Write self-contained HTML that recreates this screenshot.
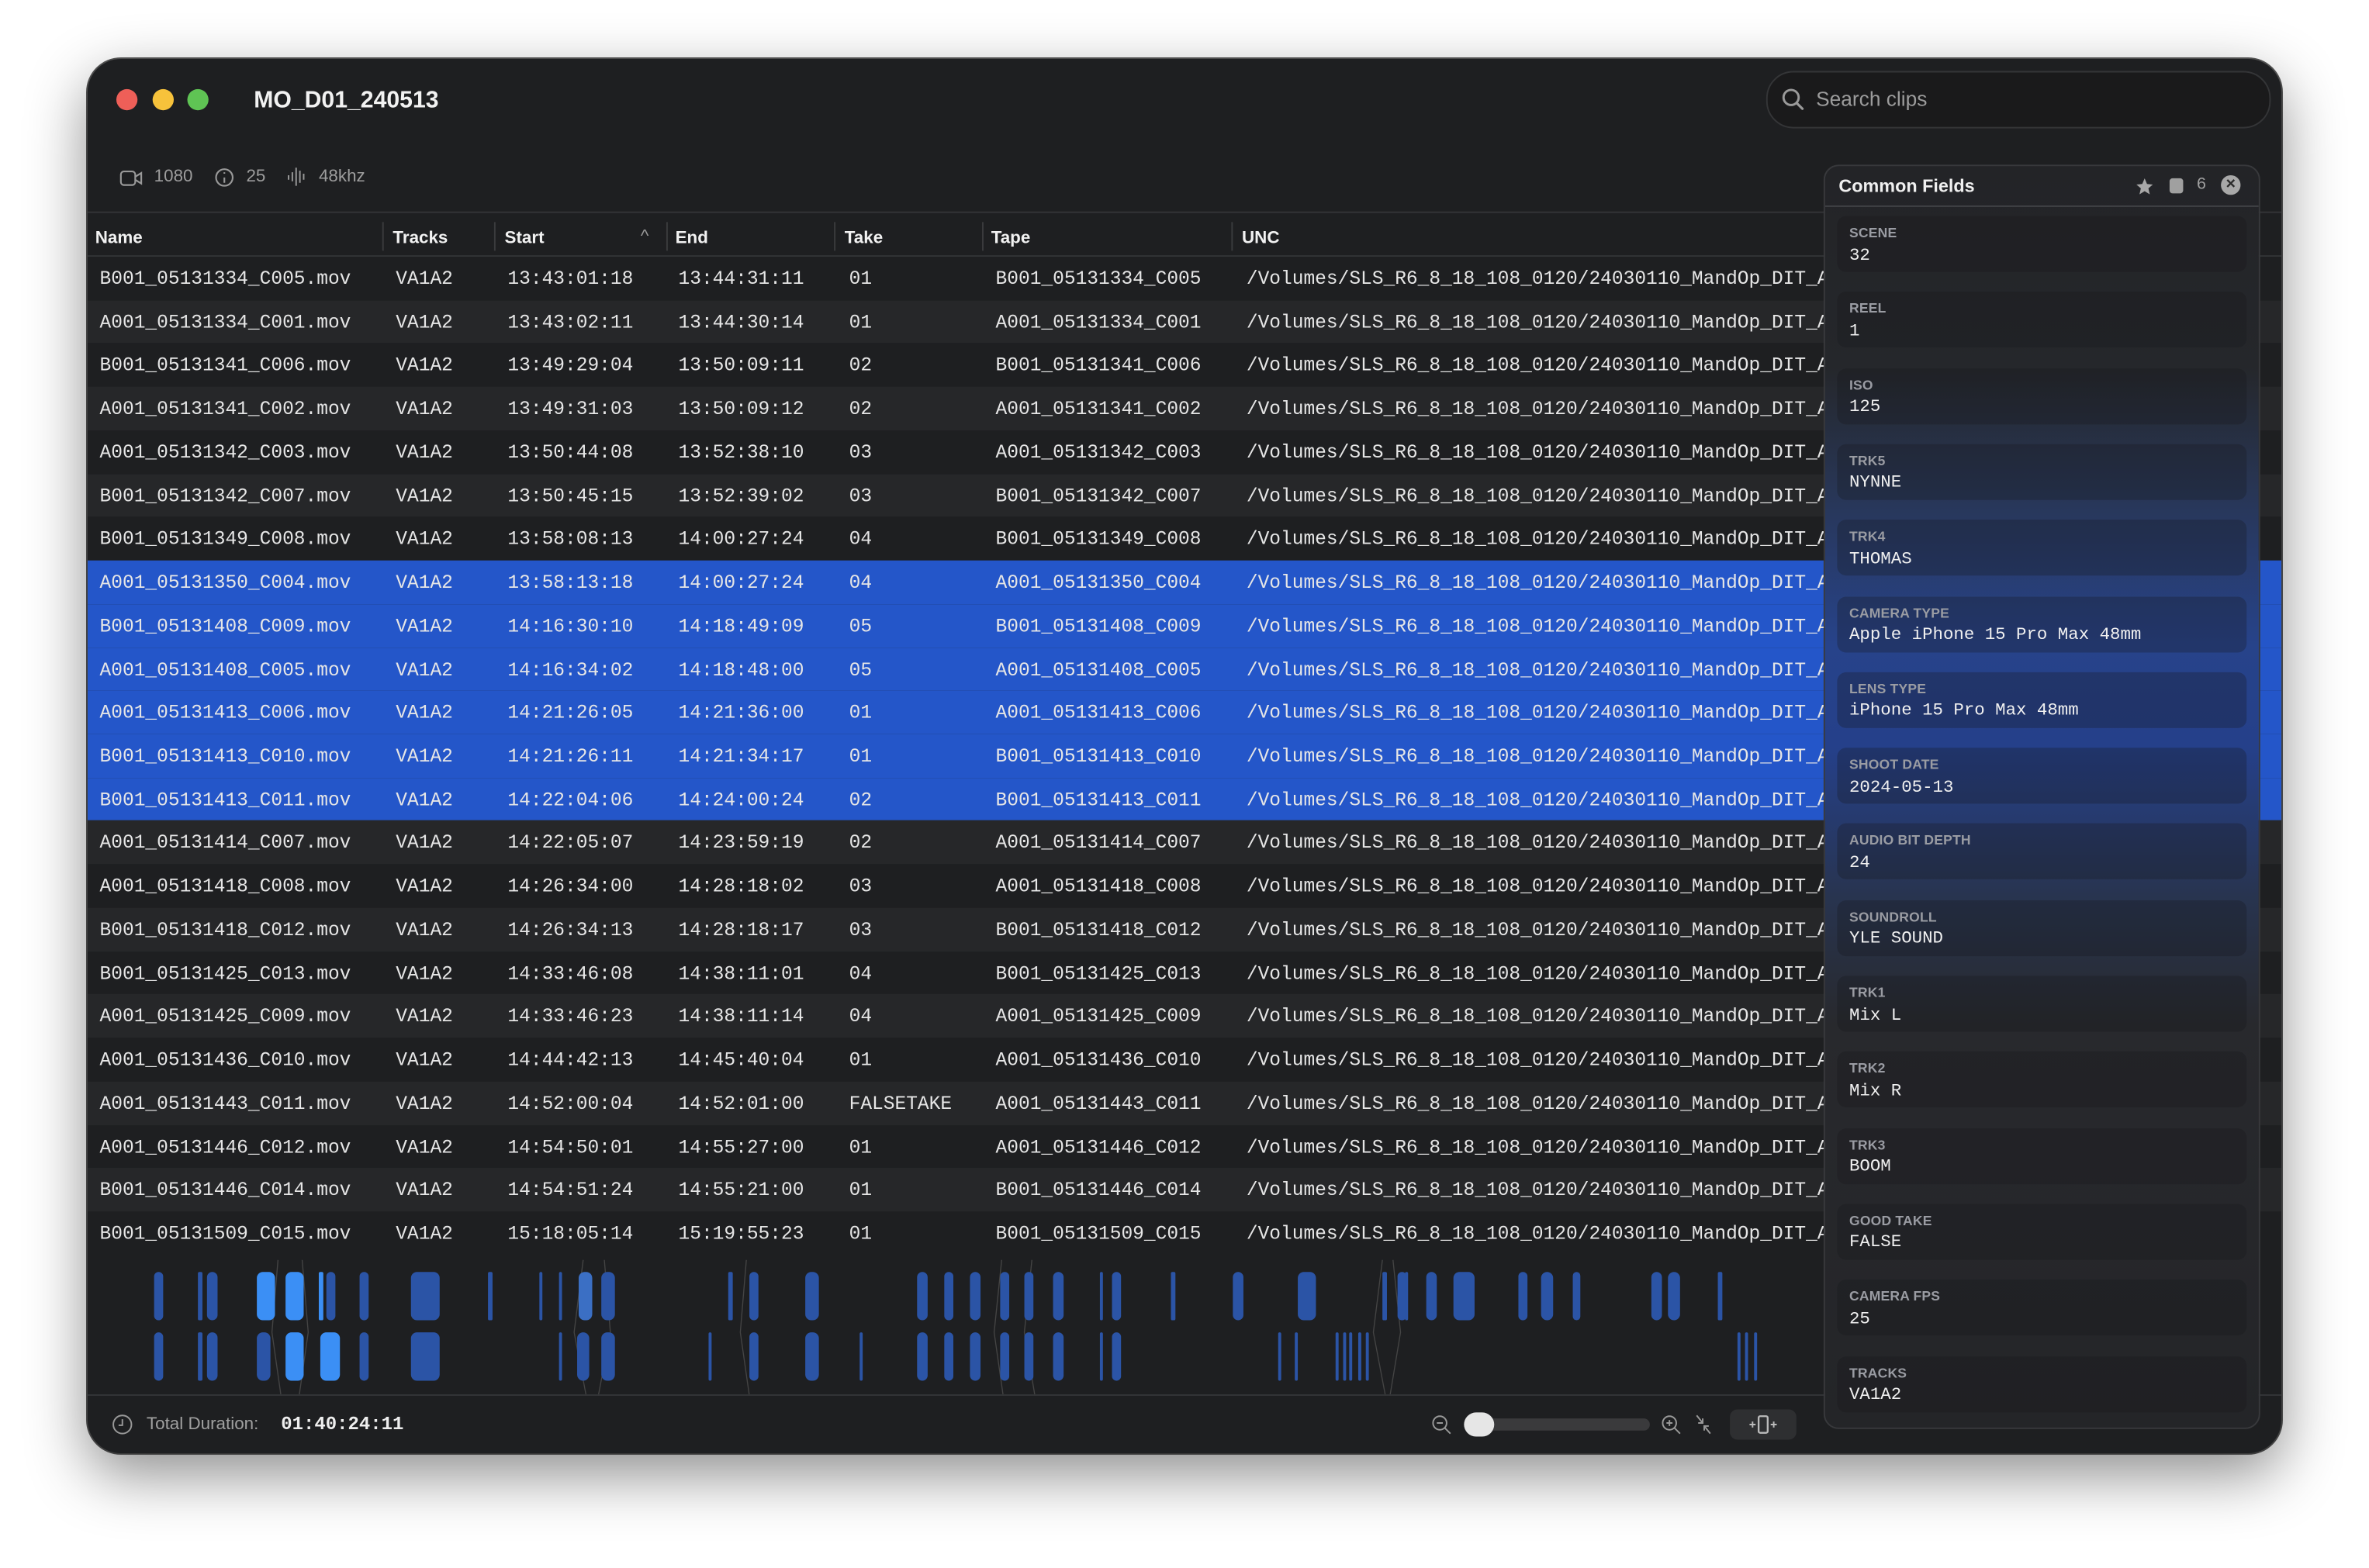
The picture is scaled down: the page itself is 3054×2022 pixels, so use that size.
<!DOCTYPE html>
<html><head><meta charset="utf-8">
<style>
html,body{margin:0;padding:0;width:3054px;height:2022px;overflow:hidden;background:#fff;}
#s{position:absolute;left:0;top:0;width:1568px;height:1038px;transform:scale(1.9477,1.948);transform-origin:0 0;font-family:"Liberation Sans",sans-serif;}
.win{position:absolute;left:58px;top:39px;width:1452px;height:923px;border-radius:22px;background:#1e1f21;box-shadow:0 14px 40px rgba(0,0,0,.45),0 0 0 1px #555;overflow:hidden;}
.abs{position:absolute;}
.mono{font-family:"Liberation Mono",monospace;}
.row{position:absolute;left:0;width:1452px;height:28.73px;font-family:"Liberation Mono",monospace;font-size:12.6px;color:#e6e6e6;}
.row span{position:absolute;top:8px;white-space:nowrap;}
.hdr{font-family:"Liberation Sans",sans-serif;}
.hdr span{position:absolute;top:11px;font-size:11.5px;font-weight:bold;color:#f2f2f2;}
.div{position:absolute;top:6px;width:1px;height:19px;background:#3a3b3d;}
.panel{position:absolute;left:1149px;top:70px;width:287px;height:835px;border-radius:10px;border:1px solid #38393c;background:linear-gradient(180deg,#232427 0%,#25272b 16%,#283656 26%,#27438a 38%,#25408a 46%,#28344f 58%,#28292d 68%,#242528 100%);overflow:hidden;}
.card{position:absolute;left:8px;width:271px;height:37px;border-radius:6px;background:rgba(20,22,26,.28);}
.card .l{position:absolute;left:8px;top:6px;font-size:9px;font-weight:bold;color:#9a9ca3;letter-spacing:.1px;}
.card .v{position:absolute;left:8px;top:19.5px;font-family:"Liberation Mono",monospace;font-size:11.5px;color:#f0f0f0;}
.bar{position:absolute;border-radius:4px;background:#2b54a6;}
.lane1{top:803px;height:32px;}
.lane2{top:843px;height:32px;}
.br{background:#3b8ff5;}
.lt{background:#3b6fc4;}
</style></head><body><div id="s">
<div class="win">
 <div class="abs" style="left:19px;top:20px;width:14px;height:14px;border-radius:50%;background:#ee5f58"></div>
 <div class="abs" style="left:43px;top:20px;width:14px;height:14px;border-radius:50%;background:#f7c23b"></div>
 <div class="abs" style="left:66px;top:20px;width:14px;height:14px;border-radius:50%;background:#5fc454"></div>
 <div class="abs" style="left:110px;top:19px;font-size:15.5px;font-weight:bold;color:#f2f2f2">MO_D01_240513</div>
 <div class="abs" style="left:1111px;top:8px;width:332px;height:36px;border-radius:18px;background:#1a1a1b;border:1px solid #343537"></div>
 <svg class="abs" style="left:1121px;top:19px" width="16" height="16" viewBox="0 0 16 16"><circle cx="6.5" cy="6.5" r="5" fill="none" stroke="#9a9a9a" stroke-width="1.5"/><path d="M10.2 10.2L14 14" stroke="#9a9a9a" stroke-width="1.6" stroke-linecap="round"/></svg>
 <div class="abs" style="left:1144px;top:19px;font-size:13.5px;color:#9c9c9c">Search clips</div>
 <svg class="abs" style="left:21px;top:73px" width="16" height="12" viewBox="0 0 16 12"><rect x="1" y="1.5" width="9.5" height="9" rx="2" fill="none" stroke="#999" stroke-width="1.1"/><path d="M10.5 5L14.5 2.5V9.5L10.5 7" fill="none" stroke="#999" stroke-width="1.1"/></svg>
 <div class="abs" style="left:44px;top:72px;font-size:11.5px;color:#9d9d9d">1080</div>
 <svg class="abs" style="left:84px;top:72px" width="13" height="13" viewBox="0 0 13 13"><circle cx="6.5" cy="6.5" r="5.5" fill="none" stroke="#999" stroke-width="1.1"/><path d="M6.5 6.5V10M6.5 3v1" stroke="#999" stroke-width="1.1"/></svg>
 <div class="abs" style="left:105px;top:72px;font-size:11.5px;color:#9d9d9d">25</div>
 <svg class="abs" style="left:132px;top:71px" width="14" height="14" viewBox="0 0 14 14"><path d="M1 6v3M3.5 4v6M6 1v12M8.5 3v8M11 5v4" stroke="#999" stroke-width="1"/></svg>
 <div class="abs" style="left:153px;top:72px;font-size:11.5px;color:#9d9d9d">48khz</div>
 <div class="abs" style="left:0;top:101px;width:1452px;height:1px;background:#333437"></div>
 <div class="row hdr" style="top:102px">
  <span style="left:5px">Name</span><div class="div" style="left:195px"></div>
  <span style="left:202px">Tracks</span><div class="div" style="left:269px"></div>
  <span style="left:276px">Start</span><span style="left:366px;font-weight:normal;color:#999;top:10px">^</span><div class="div" style="left:383px"></div>
  <span style="left:389px">End</span><div class="div" style="left:494px"></div>
  <span style="left:501px">Take</span><div class="div" style="left:592px"></div>
  <span style="left:598px">Tape</span><div class="div" style="left:757px"></div>
  <span style="left:764px">UNC</span>
 </div>
 <div class="abs" style="left:0;top:130px;width:1452px;height:1px;background:#333437"></div>
 <div id="rows"></div>
 <svg class="abs" style="left:0;top:795px" width="1100" height="90" viewBox="0 0 1100 90"><g stroke="#444" stroke-width=".7" fill="none"><path d="M126 0L122 48L128 90M142 0 146 48 140 90"/><path d="M328 0L322 48L330 90M342 0 346 48 338 90"/><path d="M436 0 432 48 438 90"/><path d="M605 0 600 48 606 90M625 0 620 48 627 90"/><path d="M857 0 851 48 859 90M864 0 869 48 862 90"/></g></svg>
 <div id="tl"></div>
 <div class="abs" style="left:0;top:884px;width:1452px;height:1px;background:#333437"></div>
 <svg class="abs" style="left:16px;top:897px" width="14" height="14" viewBox="0 0 14 14"><circle cx="7" cy="7" r="6" fill="none" stroke="#999" stroke-width="1"/><path d="M7 3.5V7.5H4.5" fill="none" stroke="#999" stroke-width="1"/></svg>
 <div class="abs" style="left:39px;top:898px;font-size:11.5px;color:#a0a0a0">Total Duration:</div>
 <div class="abs mono" style="left:128px;top:897px;font-size:12.3px;font-weight:bold;color:#eee">01:40:24:11</div>
 <svg class="abs" style="left:889px;top:897px" width="14" height="14" viewBox="0 0 14 14"><circle cx="6" cy="6" r="4.5" fill="none" stroke="#999" stroke-width="1"/><path d="M9.3 9.3L13 13M4 6h4" stroke="#999" stroke-width="1"/></svg>
 <div class="abs" style="left:920px;top:900px;width:114px;height:8px;border-radius:4px;background:#3a3a3c"></div>
 <div class="abs" style="left:911px;top:896px;width:20px;height:16px;border-radius:8px;background:#e6e6e6"></div>
 <svg class="abs" style="left:1041px;top:897px" width="14" height="14" viewBox="0 0 14 14"><circle cx="6" cy="6" r="4.5" fill="none" stroke="#999" stroke-width="1"/><path d="M9.3 9.3L13 13M4 6h4M6 4v4" stroke="#999" stroke-width="1"/></svg>
 <svg class="abs" style="left:1063px;top:897px" width="13" height="14" viewBox="0 0 13 14"><path d="M2 1L6 6M6 3v3H3M11 13L7 8M7 11V8h3" fill="none" stroke="#999" stroke-width="1"/></svg>
 <div class="abs" style="left:1087px;top:894px;width:44px;height:20px;border-radius:5px;background:#2e2f31"></div>
 <svg class="abs" style="left:1099px;top:897px" width="20" height="14" viewBox="0 0 20 14"><rect x="7" y="1.5" width="6" height="11" rx="1" fill="none" stroke="#bbb" stroke-width="1.2"/><path d="M1 7h4M15 7h4M3 5v4M17 5v4" stroke="#bbb" stroke-width="1"/></svg>
 <div class="panel">
  <div class="abs" style="left:9px;top:6px;font-size:12px;font-weight:bold;color:#f0f0f0">Common Fields</div>
  <svg class="abs" style="left:205px;top:7px" width="13" height="13" viewBox="0 0 24 24"><path d="M12 2l2.9 6.9 7.1.6-5.4 4.7 1.7 7.3L12 17.6 5.7 21.5l1.7-7.3L2 9.5l7.1-.6z" fill="#a8a8a8"/></svg>
  <div class="abs" style="left:228px;top:8px;width:9px;height:10px;border-radius:2px;background:#a0a0a0"></div>
  <div class="abs" style="left:246px;top:6px;font-size:11px;color:#a0a0a0">6</div>
  <div class="abs" style="left:262px;top:6px;width:13px;height:13px;border-radius:50%;background:#a8a8a8;color:#2a2a2a;font-size:11px;line-height:13px;text-align:center;font-weight:bold">×</div>
  <div class="abs" style="left:0;top:26px;width:287px;height:1px;background:#404145"></div>
  <div id="cards"></div>
 </div>
</div>
</div>
<script>
var R=[["B001_05131334_C005.mov","13:43:01:18","13:44:31:11","01"],["A001_05131334_C001.mov","13:43:02:11","13:44:30:14","01"],["B001_05131341_C006.mov","13:49:29:04","13:50:09:11","02"],["A001_05131341_C002.mov","13:49:31:03","13:50:09:12","02"],["A001_05131342_C003.mov","13:50:44:08","13:52:38:10","03"],["B001_05131342_C007.mov","13:50:45:15","13:52:39:02","03"],["B001_05131349_C008.mov","13:58:08:13","14:00:27:24","04"],["A001_05131350_C004.mov","13:58:13:18","14:00:27:24","04"],["B001_05131408_C009.mov","14:16:30:10","14:18:49:09","05"],["A001_05131408_C005.mov","14:16:34:02","14:18:48:00","05"],["A001_05131413_C006.mov","14:21:26:05","14:21:36:00","01"],["B001_05131413_C010.mov","14:21:26:11","14:21:34:17","01"],["B001_05131413_C011.mov","14:22:04:06","14:24:00:24","02"],["A001_05131414_C007.mov","14:22:05:07","14:23:59:19","02"],["A001_05131418_C008.mov","14:26:34:00","14:28:18:02","03"],["B001_05131418_C012.mov","14:26:34:13","14:28:18:17","03"],["B001_05131425_C013.mov","14:33:46:08","14:38:11:01","04"],["A001_05131425_C009.mov","14:33:46:23","14:38:11:14","04"],["A001_05131436_C010.mov","14:44:42:13","14:45:40:04","01"],["A001_05131443_C011.mov","14:52:00:04","14:52:01:00","FALSETAKE"],["A001_05131446_C012.mov","14:54:50:01","14:55:27:00","01"],["B001_05131446_C014.mov","14:54:51:24","14:55:21:00","01"],["B001_05131509_C015.mov","15:18:05:14","15:19:55:23","01"]];
var h="";R.forEach(function(r,i){var bg=(i>=7&&i<=12)?"#2456c9":(i%2?"#262729":"#1e1f21");var t=131+i*28.73;
h+='<div class="row" style="top:'+t+'px;background:'+bg+'"><span style="left:8px">'+r[0]+'</span><span style="left:204px">VA1A2</span><span style="left:278px">'+r[1]+'</span><span style="left:391px">'+r[2]+'</span><span style="left:504px">'+r[3]+'</span><span style="left:601px">'+r[0].replace(".mov","")+'</span><span style="left:767px">/Volumes/SLS_R6_8_18_108_0120/24030110_MandOp_DIT_A</span></div>';});
document.getElementById("rows").innerHTML=h;
var tops=[[102,6],[131,3],[137,7],[170,12,"br"],[189,12,"br"],[211,3,"br"],[216,6],[238,6],[272,19],[323,3],[357,2],[370,2],[383,9,"lt"],[398,9],[482,3],[496,6],[533,9],[607,7],[625,6],[642,7],[662,6],[678,6],[697,7],[728,2],[736,6],[775,3],[816,7],[859,12],[915,3],[925,6],[930,2],[944,7],[962,14],[1005,6],[1020,8],[1041,5],[1093,7],[1104,8],[1137,3]];
var bots=[[102,6],[131,3],[137,7],[170,9],[189,12,"br"],[212,13,"br"],[238,6],[272,19],[370,2],[382,8],[398,9],[469,2],[496,6],[533,9],[569,2],[607,7],[625,6],[642,7],[662,6],[678,6],[697,7],[728,2],[736,6],[846,2],[857,2],[884,2],[889,2],[893,2],[899,2],[904,2],[1150,2],[1155,2],[1161,2]];
var g="";tops.forEach(function(b){g+='<div class="bar lane1 '+(b[2]||"")+'" style="left:'+(b[0]-58)+'px;width:'+b[1]+'px;'+(b[1]<4?'border-radius:1px':'')+'"></div>';});
bots.forEach(function(b){g+='<div class="bar lane2 '+(b[2]||"")+'" style="left:'+(b[0]-58)+'px;width:'+b[1]+'px;'+(b[1]<4?'border-radius:1px':'')+'"></div>';});
document.getElementById("tl").innerHTML=g;
var C=[["SCENE","32"],["REEL","1"],["ISO","125"],["TRK5","NYNNE"],["TRK4","THOMAS"],["CAMERA TYPE","Apple iPhone 15 Pro Max 48mm"],["LENS TYPE","iPhone 15 Pro Max 48mm"],["SHOOT DATE","2024-05-13"],["AUDIO BIT DEPTH","24"],["SOUNDROLL","YLE SOUND"],["TRK1","Mix L"],["TRK2","Mix R"],["TRK3","BOOM"],["GOOD TAKE","FALSE"],["CAMERA FPS","25"],["TRACKS","VA1A2"]];
var c="";C.forEach(function(x,i){c+='<div class="card" style="top:'+(33+i*50.3)+'px"><div class="l">'+x[0]+'</div><div class="v">'+x[1]+'</div></div>';});
document.getElementById("cards").innerHTML=c;
</script>
</body></html>
